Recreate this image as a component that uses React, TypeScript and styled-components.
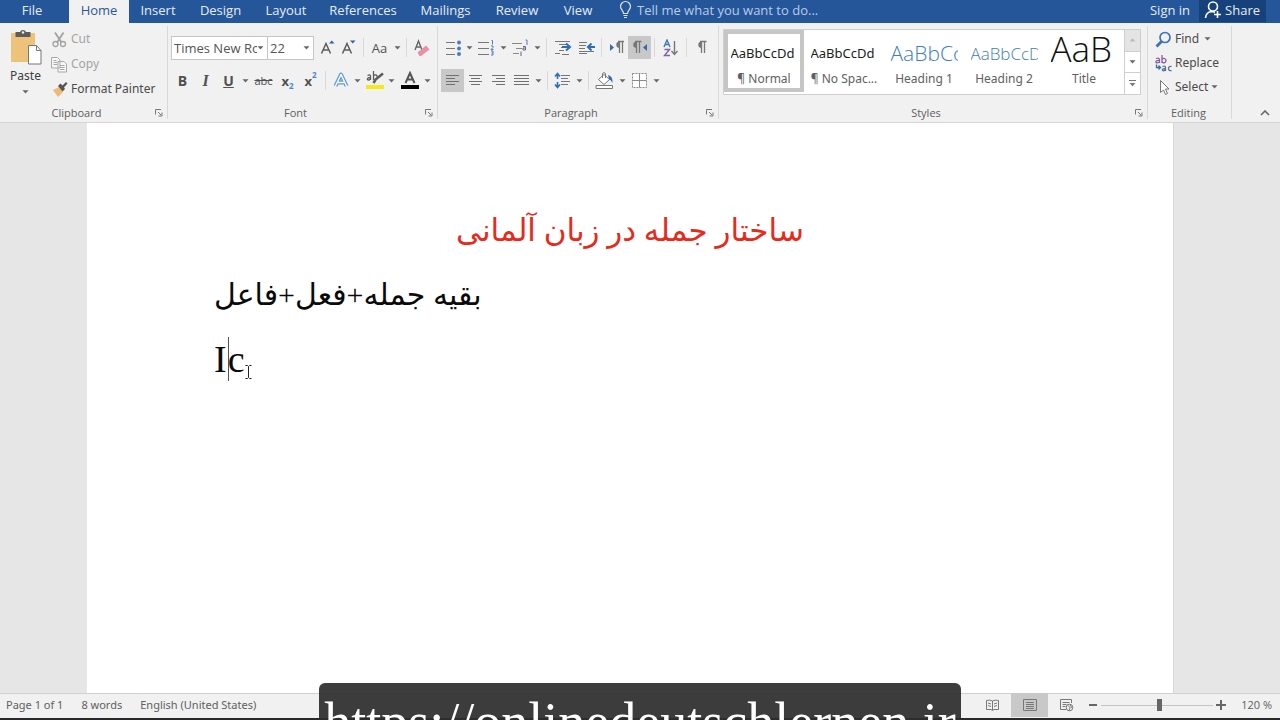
import React from 'react';
import styled, { createGlobalStyle, css } from 'styled-components';

const ui = '"Open Sans", "Noto Sans", sans-serif';
const uiWide = '"Noto Sans", "Open Sans", sans-serif';
const serif = '"Liberation Serif", "DejaVu Sans", serif';

const Global = createGlobalStyle`
  * { box-sizing: border-box; }
  body { margin: 0; font-family: ${ui}; font-size: 12px; color: #505050; }
  button, input, select { font: inherit; color: inherit; margin: 0; padding: 0; border: 0; background: none; }
  svg { display: block; flex: none; }
`;

const Window = styled.div`
  position: relative;
  display: flex;
  flex-direction: column;
  height: 100vh;
  overflow: hidden;
  background: #e6e6e6;
`;

/* ---------- tab strip ---------- */
const TabStrip = styled.nav`
  display: flex;
  flex: none;
  height: 23px;
  background: #25569a;
  color: #e6edf6;
  font-size: 13px;
  line-height: 20px;
`;
const Tab = styled.button<{ $w: number; $active?: boolean }>`
  width: ${p => p.$w}px;
  height: 23px;
  padding-bottom: 3px;
  line-height: 20px;
  white-space: nowrap;
  ${p => p.$active && css`background: #f1f1f1; color: #2b579a;`}
`;
const FileTab = styled(Tab)`
  margin-right: 5px;
`;
const TellMe = styled.label`
  display: flex;
  flex: 1;
  gap: 5px;
  padding-left: 14px;
`;
const TellMeInput = styled.input`
  flex: 1;
  height: 20px;
  line-height: 20px;
  &::placeholder { color: #b9cce6; opacity: 1; }
`;
const SignIn = styled.a`
  padding: 0 9px;
  color: inherit;
  text-decoration: none;
`;
const Share = styled.button`
  display: flex;
  align-items: center;
  gap: 3px;
  height: 22px;
  margin-right: 14px;
  padding: 0 6px 2px 5px;
  background: #17417b;
`;

/* ---------- ribbon ---------- */
const Ribbon = styled.div`
  display: flex;
  flex: none;
  height: 100px;
  padding-top: 3px;
  background: #f1f1f1;
  border-bottom: 1px solid #d5d5d5;
`;
const Group = styled.section<{ $w?: number }>`
  display: flex;
  flex-direction: column;
  margin-bottom: 3px;
  border-right: 1px solid #d8d8d8;
  ${p => (p.$w ? css`width: ${p.$w}px; flex: none;` : css`flex: 1; min-width: 0;`)}
`;
const GroupBody = styled.div`
  flex: 1;
`;
const GroupFoot = styled.div`
  display: flex;
  align-items: center;
  height: 12px;
  padding-right: 2px;
  font-size: 11px;
  line-height: 12px;
  color: #606060;
`;
const GroupTitle = styled.span`
  flex: 1;
  text-align: center;
`;
const Launcher = styled.button`
  width: 12px;
  height: 12px;
`;
const CollapseArea = styled.div`
  display: flex;
  align-items: flex-end;
  justify-content: flex-end;
  width: 48px;
  padding: 0 10px 6px 0;
`;

const ClipboardBody = styled(GroupBody)`
  display: flex;
  padding-left: 4px;
`;
const PasteButton = styled.button`
  display: flex;
  flex-direction: column;
  align-items: center;
  width: 43px;
  padding-top: 3px;
  font-family: ${uiWide};
  font-size: 12px;
  line-height: 20px;
  color: #404040;
`;
const PasteArrow = styled.span`
  padding-top: 4px;
`;
const CommandList = styled.div<{ $gap: number; $left: number }>`
  display: flex;
  flex-direction: column;
  gap: ${p => p.$gap}px;
  padding: 2px 0 0 ${p => p.$left}px;
`;
const Command = styled.button<{ $muted?: boolean }>`
  display: flex;
  align-items: center;
  gap: 3px;
  height: 22px;
  font-family: ${uiWide};
  font-size: 12px;
  line-height: 22px;
  white-space: nowrap;
  color: ${p => (p.$muted ? '#a3a3a3' : '#4a4a4a')};
`;

const Toolbar = styled.div`
  display: flex;
  align-items: center;
  height: 23px;
  padding-left: 3px;
`;
const ToolBody = styled(GroupBody)`
  display: flex;
  flex-direction: column;
  gap: 10px;
  padding-top: 10px;
`;
const Tool = styled.button<{ $w?: number; $on?: boolean }>`
  display: flex;
  flex: none;
  align-items: center;
  justify-content: center;
  width: ${p => p.$w ?? 23}px;
  height: 23px;
  color: #505050;
  background: ${p => (p.$on ? '#c8c8c8' : 'transparent')};
`;
const ArrowButton = styled.button`
  display: flex;
  flex: none;
  align-items: center;
  justify-content: center;
  width: 11px;
  height: 23px;
`;
const Rule = styled.i`
  width: 1px;
  height: 19px;
  margin: 0 3px;
  background: #d8d8d8;
`;
const Letter = styled.span<{ $bold?: boolean; $italic?: boolean; $under?: boolean; $strike?: boolean; $size?: number }>`
  font-size: ${p => p.$size ?? 14}px;
  line-height: 20px;
  font-weight: ${p => (p.$bold ? 700 : 400)};
  ${p => p.$italic && css`font-style: italic; font-family: "Liberation Serif", serif; font-weight: 700;`}
  ${p => p.$under && css`text-decoration: underline;`}
  ${p => p.$strike && css`text-decoration: line-through;`}
`;
const Script = styled.span<{ $up?: boolean }>`
  align-self: ${p => (p.$up ? 'flex-start' : 'flex-end')};
  font-size: 8px;
  line-height: 12px;
  font-weight: 700;
  color: #4a86c5;
`;
const Combo = styled.label<{ $w: number }>`
  display: flex;
  align-items: center;
  width: ${p => p.$w}px;
  height: 24px;
  margin-right: -1px;
  padding-right: 3px;
  background: #fff;
  border: 1px solid #c6c6c6;
`;
const ComboSelect = styled.select`
  flex: 1;
  min-width: 0;
  height: 22px;
  padding-left: 2px;
  appearance: none;
  outline: 0;
  font-size: 13px;
  text-overflow: clip;
  color: #555;
`;
const AfterCombo = styled.div`
  display: flex;
  align-items: center;
  padding-left: 4px;
`;

/* ---------- styles gallery ---------- */
const StylesBody = styled(GroupBody)`
  padding: 3px 6px 0 4px;
`;
const Gallery = styled.div`
  display: flex;
  height: 66px;
  background: #fff;
  border: 1px solid #cfcfcf;
`;
const Tiles = styled.div`
  display: flex;
  flex: 1;
  min-width: 0;
  overflow: hidden;
`;
const Tile = styled.button<{ $on?: boolean }>`
  display: flex;
  flex: none;
  flex-direction: column;
  align-items: center;
  width: 80px;
  height: 62px;
  border: 4px solid ${p => (p.$on ? '#c6c6c6' : 'transparent')};
`;
const Preview = styled.span<{ $size: number; $line: number; $color: string; $light?: boolean }>`
  width: 67px;
  height: 33px;
  margin-top: 3px;
  overflow: hidden;
  text-align: left;
  white-space: nowrap;
  font-family: ${p => (p.$light ? ui : uiWide)};
  font-size: ${p => p.$size}px;
  line-height: ${p => p.$line}px;
  font-weight: ${p => (p.$light ? 300 : 400)};
  color: ${p => p.$color};
`;
const TileName = styled.span`
  font-family: ${uiWide};
  font-size: 12px;
  line-height: 18px;
  white-space: nowrap;
  color: #606060;
`;
const GalleryNav = styled.div`
  display: flex;
  flex-direction: column;
  width: 16px;
  border-left: 1px solid #cfcfcf;
`;
const NavButton = styled.button<{ $off?: boolean }>`
  display: flex;
  flex: 1;
  align-items: center;
  justify-content: center;
  background: ${p => (p.$off ? '#e4e4e4' : '#fff')};
  & + & { border-top: 1px solid #cfcfcf; }
`;

/* ---------- document ---------- */
const Workspace = styled.main`
  display: flex;
  flex: 1;
  min-height: 0;
  padding: 0 106px 0 87px;
`;
const Sheet = styled.article`
  flex: 1;
  padding: 76px 127px 0;
  overflow: hidden;
  background: #fff;
  border-right: 1px solid #d8d8d8;
  font-family: ${serif};
  font-size: 38px;
  line-height: 64px;
  color: #0a0a0a;
`;
const Heading = styled.h1`
  margin: 0;
  font-size: 31px;
  line-height: 64px;
  font-weight: 400;
  text-align: center;
  color: #e62a1c;
`;
const Line = styled.p<{ $arabic?: boolean }>`
  display: flex;
  align-items: center;
  height: 64px;
  margin: 0;
  font-size: ${p => (p.$arabic ? 30 : 38)}px;
`;
const Caret = styled.i`
  width: 1px;
  height: 44px;
  margin: 0 -1px 0 1px;
  background: #555;
`;
const Pointer = styled.svg`
  position: absolute;
  left: 244px;
  top: 364px;
`;

/* ---------- status bar ---------- */
const StatusBar = styled.footer`
  display: flex;
  flex: none;
  align-items: center;
  height: 27px;
  padding: 0 8px 2px 6px;
  background: #f1f1f1;
  border-top: 1px solid #d0d0d0;
  border-bottom: 2px solid #2a2a2a;
  font-size: 11px;
  line-height: 22px;
  color: #606060;
`;
const StatusItem = styled.span`
  margin-right: 18px;
  font-family: ${uiWide};
`;
const Spacer = styled.div`
  flex: 1;
`;
const ViewButton = styled.button<{ $on?: boolean }>`
  display: flex;
  align-items: center;
  justify-content: center;
  width: 37px;
  height: 24px;
  background: ${p => (p.$on ? '#c8c8c8' : 'transparent')};
`;
const ZoomButton = styled.button`
  width: 16px;
  height: 16px;
  display: flex;
  align-items: center;
  justify-content: center;
`;
const ZoomRange = styled.input`
  appearance: none;
  width: 112px;
  height: 14px;
  background: linear-gradient(#c4c4c4, #c4c4c4) center / 100% 1px no-repeat;
  &::-webkit-slider-thumb { appearance: none; width: 5px; height: 12px; background: #666; }
`;
const ZoomValue = styled.span`
  width: 43px;
  text-align: right;
`;

const Caption = styled.div`
  position: absolute;
  left: 319px;
  right: 319px;
  bottom: 0;
  height: 37px;
  overflow: hidden;
  border-radius: 6px 6px 0 0;
  background: rgba(45, 45, 45, 0.92);
  color: #fff;
  font-family: "Liberation Serif", serif;
  font-size: 54px;
  line-height: 78px;
  text-align: center;
  white-space: nowrap;
`;

/* ---------- drawings ---------- */
const Down = ({ c = '#666' }: { c?: string }) => (
  <svg width="7" height="4" viewBox="0 0 7 4"><path d="M0.5 0.3h6L3.500 3.600z" fill={c} /></svg>
);
const LaunchIcon = () => (
  <svg width="12" height="12" viewBox="0 0 12 12" fill="none" stroke="#777">
    <path d="M2.500 7.500V2.500H8M5 5l3 3M9 5.500V9H5.500" />
  </svg>
);
const Bulb = () => (
  <svg width="13" height="19" viewBox="0 0 13 19" fill="none" stroke="#dbe6f4" strokeWidth="1.200">
    <path d="M4.500 13.500c0-3-3-3.800-3-7a5 5 0 0 1 10 0c0 3.200-3 4-3 7zM4.500 15.500h4M5 17.500h3" />
  </svg>
);
const Person = () => (
  <svg width="18" height="19" viewBox="0 0 18 19" fill="none" stroke="#fff" strokeWidth="1.600">
    <circle cx="9" cy="5.500" r="4.500" /><path d="M1.500 17c.3-3.500 2.500-6 6-6.500M13.500 10v7M10 13.500h7M6.500 10.200l4.500 1" />
  </svg>
);
const PasteIcon = () => (
  <svg width="32" height="37" viewBox="0 0 32 37">
    <path d="M1 4h24v29H1z" fill="#efc27c" />
    <path d="M5.500 3h4.500a3.200 3.200 0 0 1 6 0h4.500v5H5.500z" fill="#5c5c5c" /><circle cx="13" cy="3.500" r="1.200" fill="#f1f1f1" />
    <path d="M18.500 16.500h8l4.500 5V35H18.500z" fill="#fff" stroke="#777" /><path d="M26.500 16.500v5H31" fill="none" stroke="#777" />
  </svg>
);
const CutIcon = () => (
  <svg width="17" height="17" viewBox="0 0 17 17" fill="none" stroke="#a2a2a2" strokeWidth="1.300">
    <path d="M4 1.500l6.500 10M12.500 1.500L6 11.500" strokeWidth="1.800" /><circle cx="4.500" cy="13" r="2.500" /><circle cx="12" cy="13" r="2.500" />
  </svg>
);
const CopyIcon = () => (
  <svg width="17" height="17" viewBox="0 0 17 17" fill="#f6f6f6" stroke="#aaa">
    <path d="M.5 1.500h6l2.500 2.500v8H.5zM7 5.500h6l2.500 2.500v8H7z" /><path d="M2.500 4.500h3M2.500 6.500h4M2.500 8.500h4M9 9.500h4.500M9 11.500h4.500M9 13.500h4.500" />
  </svg>
);
const BrushIcon = () => (
  <svg width="17" height="17" viewBox="0 0 17 17">
    <path d="M2 9l6-3 4 5-5 5z" fill="#eebb77" /><path d="M7 5l2.500-2.500 2 2L15 1l1.500 1.500-3.500 4 1 1.500-2.500 2.500z" fill="#555" />
  </svg>
);
const GrowA = ({ shrink }: { shrink?: boolean }) => (
  <svg width="16" height="18" viewBox="0 0 16 18" fill="none" stroke="#5c5c5c" strokeWidth="1.500">
    <path d="M1.500 14.500L6 4.500l4.500 10M3 11h6" />
    <path d={shrink ? 'M9 1.500h5.500L11.800 4.500z' : 'M9 4.500h5.500L11.800 1.500z'} fill="#2f62a5" stroke="none" />
  </svg>
);
const EraserIcon = () => (
  <svg width="17" height="18" viewBox="0 0 17 18" fill="none" stroke="#666" strokeWidth="1.400">
    <path d="M2 11L5.500 2 9 11M3.500 8h4" /><path d="M4.500 13.500l8.500-7 3.500 4-8.500 6.500h-1.500z" fill="#ea8fa4" stroke="none" />
  </svg>
);
const EffectA = () => (
  <svg width="16" height="17" viewBox="0 0 16 17" fill="none" strokeLinejoin="round">
    <path d="M2.500 14L8 2.500l5.500 11.500M5 10.500h6" stroke="#5b98d6" strokeWidth="4" /><path d="M2.500 14L8 2.500l5.500 11.500M5 10.500h6" stroke="#fff" strokeWidth="1.500" />
  </svg>
);
const HighlightIcon = () => (
  <svg width="18" height="19" viewBox="0 0 18 19" fill="none" stroke="#5c5c5c" strokeWidth="1.300">
    <path d="M1.500 4.500q3-1.500 3 .8V9M4.500 6.500c-4 0-4 2.700-1.500 2.500l1.500-1M7.500 0v9M7.500 5c1-1.500 4-1.500 3.500 1" />
    <path d="M7.500 12l2-3.500 7.500-6" strokeWidth="2.600" /><path d="M0 14h18v4H0z" fill="#f5e91b" stroke="none" />
  </svg>
);
const FontColorIcon = () => (
  <svg width="18" height="19" viewBox="0 0 18 19" fill="none" stroke="#555" strokeWidth="2">
    <path d="M4.500 12L9 2l4.500 10M6 8.500h6" /><path d="M0 14h18v4H0z" fill="#000" stroke="none" />
  </svg>
);
const BulletsIcon = () => (
  <svg width="16" height="16" viewBox="0 0 16 16"><path d="M1 2.500h9M1 8.500h9M1 14.500h9" stroke="#777" /><g fill="#4a7fb8"><circle cx="14" cy="2.500" r="2" /><circle cx="14" cy="8.500" r="2" /><circle cx="14" cy="14" r="2" /></g></svg>
);
const NumbersIcon = () => (
  <svg width="17" height="17" viewBox="0 0 17 17" fill="none" stroke="#777"><path d="M0 3.500h11M0 9.500h11M0 15.500h11" /><path d="M13.500 1.500h1v4M13 7h2v1.500l-2 2h2.500M13 12h2v4h-2M13.500 14H15" stroke="#4a7fb8" /></svg>
);
const MultiIcon = () => (
  <svg width="17" height="17" viewBox="0 0 17 17" fill="none" stroke="#888"><path d="M0 4.500h10M4 9.500h6M1 14.500h6" /><path d="M13.500 1h1.500v5" stroke="#4a7fb8" /><path d="M11 7.500h2.500V11H11V9h2.500M9 12.500V17" stroke="#667" /></svg>
);
const IndentIcon = ({ rtl }: { rtl?: boolean }) => (
  <svg width="18" height="16" viewBox="0 0 18 16" fill="none" stroke="#777">
    <path d={rtl ? 'M1 2.500h8M1 5.500h7M1 8.500h6M1 11.500h15M1 13.500h8' : 'M1 1.500h15M5 4.500h9M7 7.500h5M5 10.500h5M1 13.500h5M8 14.500h7'} />
    <path d={rtl ? 'M17 7h-6M13.500 3.500L10 7l3.500 3.500' : 'M8 7h7M12 3.500L16 7l-4 3.500'} stroke="#2f6db3" strokeWidth="2" />
  </svg>
);
const Pilcrow = ({ side }: { side?: 'l' | 'r' }) => (
  <svg width="15" height="15" viewBox="0 0 15 15">
    <g transform={side === 'l' ? 'translate(3 0)' : side === 'r' ? 'translate(-3 0)' : undefined}>
      <path d="M7 8a3.300 3.300 0 0 1 0-6.500z" fill="#777" /><path d="M6 1.500h6.500M7.500 1.500v11.500M10.500 1.500v11.500" stroke="#777" strokeWidth="1.300" fill="none" />
    </g>
    {side === 'l' && <path d="M1 4l4 3.500L1 11z" fill="#2f6db3" />}
    {side === 'r' && <path d="M15 4l-4 3.500 4 3.500z" fill="#2f6db3" />}
  </svg>
);
const SortIcon = () => (
  <svg width="16" height="18" viewBox="0 0 16 18" fill="none" strokeWidth="1.400">
    <path d="M1 8l3-7 3 7M2 5.500h4" stroke="#3f78ba" /><path d="M1.500 10.500h5l-5 6H7" stroke="#8560a0" /><path d="M11.500 2v13M8.500 12l3 3.500 3-3.500" stroke="#777" />
  </svg>
);
const AlignIcon = ({ d }: { d: string }) => (
  <svg width="15" height="14" viewBox="0 0 15 14" fill="none" stroke="#707070"><path d={d} /></svg>
);
const SpacingIcon = () => (
  <svg width="17" height="17" viewBox="0 0 17 17" fill="none" stroke="#777">
    <path d="M7 3.500h9M7 6.500h7M7 9.500h9M7 12.500h7" /><path d="M3.500 1.500v5.500M1 4.500l2.500-3L6 4.500M3.500 10v5.500M1 12.500l2.500 3 2.500-3" stroke="#2f6db3" strokeWidth="1.600" />
  </svg>
);
const BucketIcon = () => (
  <svg width="19" height="19" viewBox="0 0 19 19" fill="none" stroke="#777">
    <path d="M3.500 8.500l5.500-5 5.500 5-5.500 5z" fill="#fff" /><path d="M7.500 7V2.500Q9 .5 10.500 2.500V7" /><path d="M13 4q5 1 4.500 8-1.500-3-3.500-4z" fill="#2f6db3" stroke="none" /><path d="M1 14.500h16.500v3H1z" fill="#fff" />
  </svg>
);
const BordersIcon = () => (
  <svg width="17" height="17" viewBox="0 0 17 17" fill="#fff" stroke="#8a8a8a" strokeDasharray="2 1">
    <path d="M1.500 1.500h14v14h-14z" /><path d="M8.500 1.500v14M1.500 8.500h14" strokeDasharray="none" />
  </svg>
);
const FindIcon = () => (
  <svg width="17" height="17" viewBox="0 0 17 17" fill="none" stroke="#3b73b4"><circle cx="10" cy="6.500" r="5" strokeWidth="1.700" /><path d="M6.500 10.500L1.500 15.500" strokeWidth="2.800" /></svg>
);
const ReplaceIcon = () => (
  <svg width="17" height="17" viewBox="0 0 17 17" fill="none" strokeWidth="1.300">
    <path d="M1 3.500q3.500-1 3.500 1V8M4.500 5.500C0 5 0 8 2.500 7.800L4.500 7M7 0v8M7 4.500c1.500-2 4-1 4 1s-2.500 3-4 1.500" stroke="#865da0" />
    <path d="M7.500 11.500q3-1 3 1V16M10.500 13.500c-4 0-4 2.500-1.500 2.300l1.500-1M16.500 11.500c-4-1-4 5 0 4" stroke="#58718f" /><path d="M1.500 9.500v3H5M3.500 10.500l2 2-2 2" stroke="#2f6db3" />
  </svg>
);
const SelectIcon = () => (
  <svg width="17" height="17" viewBox="0 0 17 17" fill="#fff" stroke="#777"><path d="M5.500 1.500v12l3-2.500 2 4.500 2-1-2-4.500h3.500z" /></svg>
);
const ReadIcon = () => (
  <svg width="13" height="12" viewBox="0 0 13 12" fill="none" stroke="#777"><path d="M.5 1.500q3.500-1 6 .5 2.500-1.500 6-.5v9H8L6.500 11.500 5 10.500H.5zM6.500 2v9M2 4l3 1M2 6.500l3 1M11 4L8 5M11 6.500l-3 1" /></svg>
);
const PrintIcon = () => (
  <svg width="14" height="12" viewBox="0 0 14 12" fill="none" stroke="#777"><path d="M.5.5h13v11H.5zM3 3.500h8M3 5.500h8M3 7.500h8M3 9.500h8" /></svg>
);
const WebIcon = () => (
  <svg width="14" height="13" viewBox="0 0 14 13" fill="none" stroke="#777"><path d="M6 10.500H.5v-10h11V4M2.500 3.500h7M2.500 5.500h4M2.500 7.500h3" /><circle cx="9.500" cy="8.500" r="3.300" /><path d="M8 6.500l2 2-1 3M10 6l2 3" /></svg>
);

const LEFT = 'M1 1.500h13M1 4.500h9M1 7.500h13M1 10.500h9';
const CENTER = 'M1 1.500h13M3 4.500h9M1 7.500h13M3 10.500h9';
const RIGHT = 'M1 1.500h13M5 4.500h9M1 7.500h13M5 10.500h9';
const FULL = 'M0 1.500h15M0 4.500h15M0 7.500h15M0 10.500h15';

const Arrow = ({ label }: { label: string }) => <ArrowButton aria-label={label}><Down /></ArrowButton>;

const Foot = ({ title, launch = true }: { title: string; launch?: boolean }) => (
  <GroupFoot>
    <GroupTitle>{title}</GroupTitle>
    {launch && <Launcher aria-label={`${title} settings`}><LaunchIcon /></Launcher>}
  </GroupFoot>
);

const tabs: [string, number][] = [
  ['Insert', 58], ['Design', 67], ['Layout', 64], ['References', 90], ['Mailings', 75], ['Review', 68], ['View', 54],
];

const styles = [
  { name: '¶ Normal', text: 'AaBbCcDd', size: 13, line: 33, color: '#1c1c1c', on: true },
  { name: '¶ No Spac...', text: 'AaBbCcDd', size: 13, line: 33, color: '#1c1c1c' },
  { name: 'Heading 1', text: 'AaBbCc', size: 21, line: 33, color: '#3f7fb5', light: true },
  { name: 'Heading 2', text: 'AaBbCcD', size: 17, line: 33, color: '#3f7fb5', light: true },
  { name: 'Title', text: 'AaB', size: 35, line: 23, color: '#111', light: true },
];

export default function App() {
  return (
    <Window>
      <Global />
      <TabStrip>
        <FileTab $w={64}>File</FileTab>
        <Tab $w={60} $active>Home</Tab>
        {tabs.map(([t, w]) => <Tab key={t} $w={w}>{t}</Tab>)}
        <TellMe><Bulb /><TellMeInput aria-label="Tell me" placeholder="Tell me what you want to do..." /></TellMe>
        <SignIn href="#signin">Sign in</SignIn>
        <Share><Person />Share</Share>
      </TabStrip>

      <Ribbon>
        <Group $w={168}>
          <ClipboardBody>
            <PasteButton><PasteIcon />Paste<PasteArrow><Down /></PasteArrow></PasteButton>
            <CommandList $gap={3} $left={4}>
              <Command $muted><CutIcon />Cut</Command>
              <Command $muted><CopyIcon />Copy</Command>
              <Command><BrushIcon />Format Painter</Command>
            </CommandList>
          </ClipboardBody>
          <Foot title="Clipboard" />
        </Group>

        <Group $w={270}>
          <ToolBody>
            <Toolbar>
              <Combo $w={97}><ComboSelect aria-label="Font"><option>Times New Roman</option></ComboSelect><Down /></Combo>
              <Combo $w={47}><ComboSelect aria-label="Font size"><option>22</option></ComboSelect><Down /></Combo>
              <AfterCombo>
                <Tool $w={21} aria-label="Grow font"><GrowA /></Tool>
                <Tool $w={22} aria-label="Shrink font"><GrowA shrink /></Tool>
              </AfterCombo>
              <Rule />
              <Tool $w={25}><Letter $size={13}>Aa</Letter></Tool><Arrow label="Change case" />
              <Rule />
              <Tool $w={23} aria-label="Clear formatting"><EraserIcon /></Tool>
            </Toolbar>
            <Toolbar>
              <Tool><Letter $bold>B</Letter></Tool>
              <Tool><Letter $italic $size={16}>I</Letter></Tool>
              <Tool><Letter $bold $under>U</Letter></Tool><Arrow label="Underline style" />
              <Tool $w={25}><Letter $strike $size={11}>abc</Letter></Tool>
              <Tool><Letter $bold $size={13}>x</Letter><Script>2</Script></Tool>
              <Tool><Letter $bold $size={13}>x</Letter><Script $up>2</Script></Tool>
              <Rule />
              <Tool aria-label="Text effects"><EffectA /></Tool><Arrow label="Effects" />
              <Tool aria-label="Highlight"><HighlightIcon /></Tool><Arrow label="Highlight colour" />
              <Tool $w={25} aria-label="Font color"><FontColorIcon /></Tool><Arrow label="Font colour" />
            </Toolbar>
          </ToolBody>
          <Foot title="Font" />
        </Group>

        <Group $w={281}>
          <ToolBody>
            <Toolbar>
              <Tool aria-label="Bullets"><BulletsIcon /></Tool><Arrow label="Bullet style" />
              <Tool aria-label="Numbering"><NumbersIcon /></Tool><Arrow label="Number style" />
              <Tool aria-label="Multilevel list"><MultiIcon /></Tool><Arrow label="List style" />
              <Rule />
              <Tool $w={25} aria-label="Decrease indent"><IndentIcon /></Tool>
              <Tool aria-label="Increase indent"><IndentIcon rtl /></Tool>
              <Rule />
              <Tool aria-label="Left to right"><Pilcrow side="l" /></Tool>
              <Tool $on aria-label="Right to left"><Pilcrow side="r" /></Tool>
              <Rule />
              <Tool $w={25} aria-label="Sort"><SortIcon /></Tool>
              <Rule />
              <Tool aria-label="Show marks"><Pilcrow /></Tool>
            </Toolbar>
            <Toolbar>
              <Tool $on aria-label="Align left"><AlignIcon d={LEFT} /></Tool>
              <Tool aria-label="Center"><AlignIcon d={CENTER} /></Tool>
              <Tool aria-label="Align right"><AlignIcon d={RIGHT} /></Tool>
              <Tool aria-label="Justify"><AlignIcon d={FULL} /></Tool><Arrow label="Justify style" />
              <Rule />
              <Tool aria-label="Line spacing"><SpacingIcon /></Tool><Arrow label="Spacing" />
              <Rule />
              <Tool $w={25} aria-label="Shading"><BucketIcon /></Tool><Arrow label="Shading colour" />
              <Tool aria-label="Borders"><BordersIcon /></Tool><Arrow label="Border style" />
            </Toolbar>
          </ToolBody>
          <Foot title="Paragraph" />
        </Group>

        <Group>
          <StylesBody>
            <Gallery>
              <Tiles>
                {styles.map(s => (
                  <Tile key={s.name} $on={s.on}>
                    <Preview $size={s.size} $line={s.line} $color={s.color} $light={s.light}>{s.text}</Preview>
                    <TileName>{s.name}</TileName>
                  </Tile>
                ))}
              </Tiles>
              <GalleryNav>
                <NavButton $off aria-label="Previous row"><svg width="7" height="4" viewBox="0 0 7 4"><path d="M.5 3.600h6L3.500.3z" fill="#bbb" /></svg></NavButton>
                <NavButton aria-label="Next row"><Down /></NavButton>
                <NavButton aria-label="More styles"><svg width="7" height="7" viewBox="0 0 7 7"><path d="M0 .5h7" stroke="#777" /><path d="M.5 3h6L3.500 6.300z" fill="#777" /></svg></NavButton>
              </GalleryNav>
            </Gallery>
          </StylesBody>
          <Foot title="Styles" />
        </Group>

        <Group $w={84}>
          <GroupBody>
            <CommandList $gap={2} $left={7}>
              <Command><FindIcon />Find<ArrowButton as="span"><Down /></ArrowButton></Command>
              <Command><ReplaceIcon />Replace</Command>
              <Command><SelectIcon />Select<Down /></Command>
            </CommandList>
          </GroupBody>
          <Foot title="Editing" launch={false} />
        </Group>
        <CollapseArea>
          <button aria-label="Collapse the ribbon"><svg width="10" height="6" viewBox="0 0 10 6" fill="none" stroke="#666" strokeWidth="1.600"><path d="M1 5l4-4 4 4" /></svg></button>
        </CollapseArea>
      </Ribbon>

      <Workspace>
        <Sheet>
          <Heading dir="rtl" lang="fa">ساختار جمله در زبان آلمانی</Heading>
          <Line $arabic lang="fa"><bdi dir="rtl">بقیه جمله+فعل+فاعل</bdi></Line>
          <Line>I<Caret />c</Line>
        </Sheet>
      </Workspace>
      <Pointer width="9" height="16" viewBox="0 0 9 16" fill="none" stroke="#222"><path d="M1.500 1.500h2l1 1 1-1h2M4.500 2.500v11M1.500 14.500h2l1-1 1 1h2" /></Pointer>

      <StatusBar>
        <StatusItem>Page 1 of 1</StatusItem>
        <StatusItem>8 words</StatusItem>
        <StatusItem>English (United States)</StatusItem>
        <Spacer />
        <ViewButton aria-label="Read mode"><ReadIcon /></ViewButton>
        <ViewButton $on aria-label="Print layout"><PrintIcon /></ViewButton>
        <ViewButton aria-label="Web layout"><WebIcon /></ViewButton>
        <ZoomButton aria-label="Zoom out"><svg width="8" height="8" viewBox="0 0 8 8"><path d="M0 4h8" stroke="#666" strokeWidth="2" /></svg></ZoomButton>
        <ZoomRange type="range" aria-label="Zoom" min={0} max={100} defaultValue={52} />
        <ZoomButton aria-label="Zoom in"><svg width="10" height="10" viewBox="0 0 10 10"><path d="M0 5h10M5 0v10" stroke="#666" strokeWidth="2" /></svg></ZoomButton>
        <ZoomValue>120 %</ZoomValue>
      </StatusBar>
      <Caption>https://onlinedeutschlernen.ir</Caption>
    </Window>
  );
}
